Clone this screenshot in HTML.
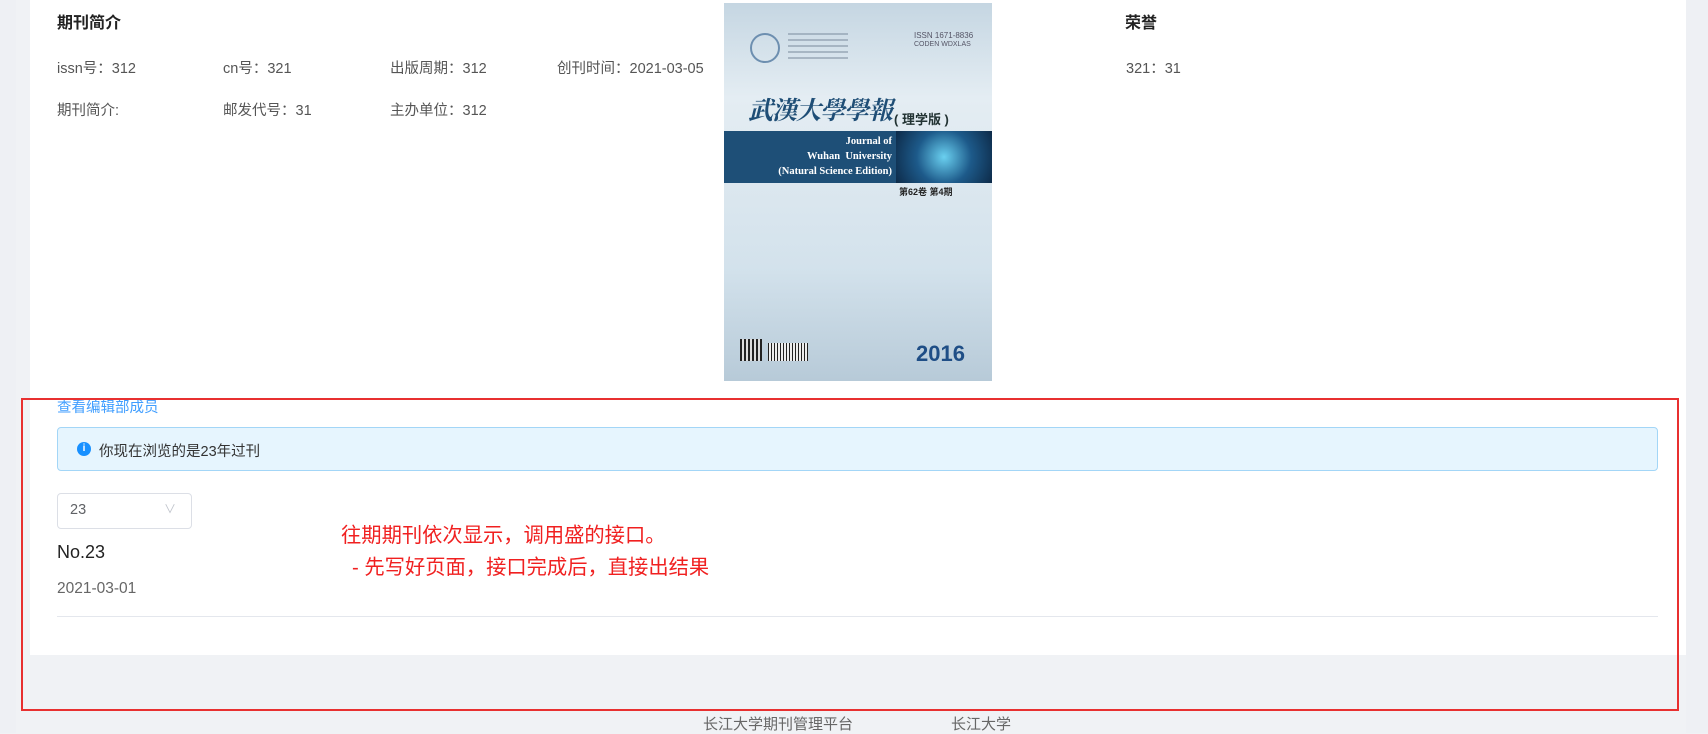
<!DOCTYPE html>
<html><head><meta charset="utf-8"><style>
*{margin:0;padding:0;box-sizing:border-box}
body{width:1708px;height:733px;overflow:hidden;background:#f0f2f5;font-family:"Liberation Sans","Noto Sans CJK SC",sans-serif;color:#333;position:relative}
.a{position:absolute;white-space:nowrap}
.card{position:absolute;left:30px;top:0;width:1656px;height:655px;background:#fff}
.lg{position:absolute;left:0;top:0;width:16px;height:733px;background:#eef0f4}
.rg{position:absolute;left:1686px;top:0;width:22px;height:733px;background:#eef0f4}
.t{font-size:14.5px;color:#555}
</style></head><body>
<div class="lg"></div><div class="rg"></div>
<div class="card"></div>
<div class="a" style="left:57px;top:9px;font-size:16px;font-weight:bold;color:#222">期刊简介</div>
<div class="a t" style="left:57px;top:57px">issn号：312</div>
<div class="a t" style="left:223px;top:57px">cn号：321</div>
<div class="a t" style="left:390px;top:57px">出版周期：312</div>
<div class="a t" style="left:557px;top:57px">创刊时间：2021-03-05</div>
<div class="a t" style="left:57px;top:99px">期刊简介:</div>
<div class="a t" style="left:223px;top:99px">邮发代号：31</div>
<div class="a t" style="left:390px;top:99px">主办单位：312</div>
<div class="a" style="left:1125px;top:9px;font-size:16px;font-weight:bold;color:#222">荣誉</div>
<div class="a t" style="left:1126px;top:57px">321：31</div>
<div class="a" style="left:724px;top:3px;width:268px;height:378px;background:linear-gradient(180deg,#c5d6e2 0%,#e4edf3 25%,#dfe9f0 40%,#d3e2ec 70%,#b7cad8 100%);overflow:hidden">
 <div class="a" style="left:26px;top:30px;width:30px;height:30px;border-radius:50%;border:2px solid #6d8fb0"></div>
 <div class="a" style="left:64px;top:30px;width:60px;height:28px;background:repeating-linear-gradient(180deg,#8898a8 0 2px,transparent 2px 6px);opacity:.6"></div>
 <div class="a" style="left:190px;top:28px;font-size:8px;color:#556">ISSN 1671-8836</div>
 <div class="a" style="left:190px;top:38px;font-size:7px;color:#556">CODEN WDXLAS</div>
 <div class="a" style="left:24px;top:88px;font-size:25px;font-style:italic;font-weight:bold;color:#1f4e76;font-family:'Noto Serif CJK SC',serif;letter-spacing:-1px">武漢大學學報</div>
 <div class="a" style="left:170px;top:106px;font-size:13px;font-weight:bold;color:#233">( 理学版 )</div>
 <div class="a" style="left:0;top:128px;width:172px;height:52px;background:#1e4f77"></div>
 <div class="a" style="left:172px;top:128px;width:96px;height:52px;background:radial-gradient(circle at 50% 50%,#6ad0f0,#1d5a8a 50%,#0d2a48)"></div>
 <div class="a" style="left:0;top:131px;width:168px;text-align:right;color:#fff;font:bold 10.5px/15px 'Liberation Serif',serif">Journal of<br>Wuhan&nbsp; University<br>(Natural Science Edition)</div>
 <div class="a" style="left:175px;top:182px;font-size:9px;font-weight:bold;color:#222">第62卷 第4期</div>
 <div class="a" style="left:16px;top:336px;width:22px;height:22px;background:repeating-linear-gradient(90deg,#222 0 2px,#ddd 2px 4px)"></div>
 <div class="a" style="left:44px;top:340px;width:40px;height:18px;background:repeating-linear-gradient(90deg,#222 0 1px,#eee 1px 3px)"></div>
 <div class="a" style="left:192px;top:338px;font:bold 22px 'Liberation Sans',sans-serif;color:#1f4e86">2016</div>
</div>
<div class="a" style="left:57px;top:396px;font-size:14.5px;color:#409eff">查看编辑部成员</div>
<div class="a" style="left:57px;top:427px;width:1601px;height:44px;background:#e6f5fe;border:1px solid #a3d6f7;border-radius:4px"></div>
<div class="a" style="left:77px;top:442px;width:14px;height:14px;border-radius:50%;background:#1890ff;color:#fff;font-size:10px;line-height:14px;text-align:center;font-weight:bold">i</div>
<div class="a" style="left:99px;top:440px;font-size:14.5px;color:#333">你现在浏览的是23年过刊</div>
<div class="a" style="left:57px;top:493px;width:135px;height:36px;border:1px solid #dcdfe6;border-radius:4px"></div>
<div class="a" style="left:70px;top:502px;font-size:14.5px;color:#606266">23</div>
<div class="a" style="left:164px;top:500px;font-size:12px;color:#c0c4cc">∨</div>
<div class="a" style="left:57px;top:542px;font-size:18px;color:#222">No.23</div>
<div class="a" style="left:57px;top:580px;font-size:15.5px;color:#666">2021-03-01</div>
<div class="a" style="left:57px;top:616px;width:1601px;height:1px;background:#e4e7ed"></div>
<div class="a" style="left:341px;top:518px;font-size:20.3px;color:#f02020">往期期刊依次显示，调用盛的接口。</div>
<div class="a" style="left:352px;top:550px;font-size:20.3px;color:#f02020">- 先写好页面，接口完成后，直接出结果</div>
<div class="a" style="left:21px;top:398px;width:1658px;height:313px;border:2px solid #e83030"></div>
<div class="a" style="left:703px;top:713px;font-size:15px;color:#666">长江大学期刊管理平台</div>
<div class="a" style="left:951px;top:713px;font-size:15px;color:#666">长江大学</div>
</body></html>
